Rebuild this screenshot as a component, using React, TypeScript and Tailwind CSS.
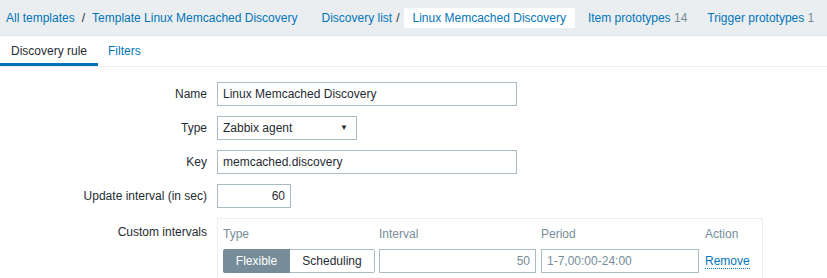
export default function App() {
  const font = { fontFamily: '"Liberation Sans", Arial, sans-serif' };
  const input =
    "h-[24px] border border-[#acbbc2] bg-white px-[5px] text-[12px] text-[#1f2c33] outline-none";

  return (
    <div style={font} className="h-[278px] w-[827px] overflow-hidden bg-white text-[12px] text-[#1f2c33]">
      {/* Header navigation */}
      <div className="flex h-[36px] items-center border-b border-[#dfe4e7] bg-[#ebeef0] pl-[6px] whitespace-nowrap">
        <a className="text-[#0275b8]">All templates</a>
        <span className="mx-[7px] text-[#1f2c33]">/</span>
        <a className="text-[#0275b8]">Template Linux Memcached Discovery</a>
        <a className="ml-[24px] text-[#0275b8]">Discovery list</a>
        <span className="mx-[4px] text-[#1f2c33]">/</span>
        <span className="flex h-[20px] items-center rounded-[2px] bg-white px-[9px] text-[#0275b8]">
          Linux Memcached Discovery
        </span>
        <a className="ml-[13px] text-[#0275b8]">
          Item prototypes <span className="text-[#768d99]">14</span>
        </a>
        <a className="ml-[20px] text-[#0275b8]">
          Trigger prototypes <span className="text-[#768d99]">1</span>
        </a>
      </div>

      {/* Tabs */}
      <div className="flex h-[31px] border-b border-[#ebeef0]">
        <div className="flex items-center border-b-[3px] border-[#0275b8] px-[11px] pt-[3px] text-[#1f2c33]">
          Discovery rule
        </div>
        <div className="flex items-center px-[10px] text-[#0275b8]">Filters</div>
      </div>

      {/* Form */}
      <div className="flex flex-col gap-[10px] pt-[15px]">
        <div className="flex items-center">
          <label className="w-[217px] pr-[10px] text-right">Name</label>
          <input readOnly className={`${input} w-[300px]`} value="Linux Memcached Discovery" />
        </div>
        <div className="flex items-center">
          <label className="w-[217px] pr-[10px] text-right">Type</label>
          <div className={`${input} flex w-[140px] items-center justify-between pr-[8px]`}>
            <span>Zabbix agent</span>
            <span className="text-[8px]">▼</span>
          </div>
        </div>
        <div className="flex items-center">
          <label className="w-[217px] pr-[10px] text-right">Key</label>
          <input readOnly className={`${input} w-[300px]`} value="memcached.discovery" />
        </div>
        <div className="flex items-center">
          <label className="w-[217px] pr-[10px] text-right">Update interval (in sec)</label>
          <input readOnly className={`${input} w-[74px] text-right`} value="60" />
        </div>
        <div className="flex items-start">
          <label className="w-[217px] pr-[10px] pt-[5px] text-right">Custom intervals</label>
          <div className="w-[546px] border border-[#ebeef0] px-[5px] pt-[6px] pb-[10px]">
            <div className="flex text-[#768d99]">
              <div className="w-[156px]">Type</div>
              <div className="w-[162px]">Interval</div>
              <div className="w-[164px]">Period</div>
              <div>Action</div>
            </div>
            <div className="mt-[6px] flex items-center">
              <div className="flex w-[156px]">
                <div className="flex h-[24px] w-[67px] items-center justify-center rounded-l-[2px] bg-[#768d99] text-white">
                  Flexible
                </div>
                <div className="flex h-[24px] w-[85px] items-center justify-center rounded-r-[2px] border border-l-0 border-[#acbbc2] text-[#1f2c33]">
                  Scheduling
                </div>
              </div>
              <div className="w-[162px]">
                <input readOnly className={`${input} w-[157px] text-right text-[#768d99]`} value="50" />
              </div>
              <div className="w-[164px]">
                <input readOnly className={`${input} w-[158px] text-[#768d99]`} value="1-7,00:00-24:00" />
              </div>
              <a className="border-b border-dotted border-[#0275b8] leading-[14px] text-[#0275b8]">Remove</a>
            </div>
          </div>
        </div>
      </div>
    </div>
  );
}
